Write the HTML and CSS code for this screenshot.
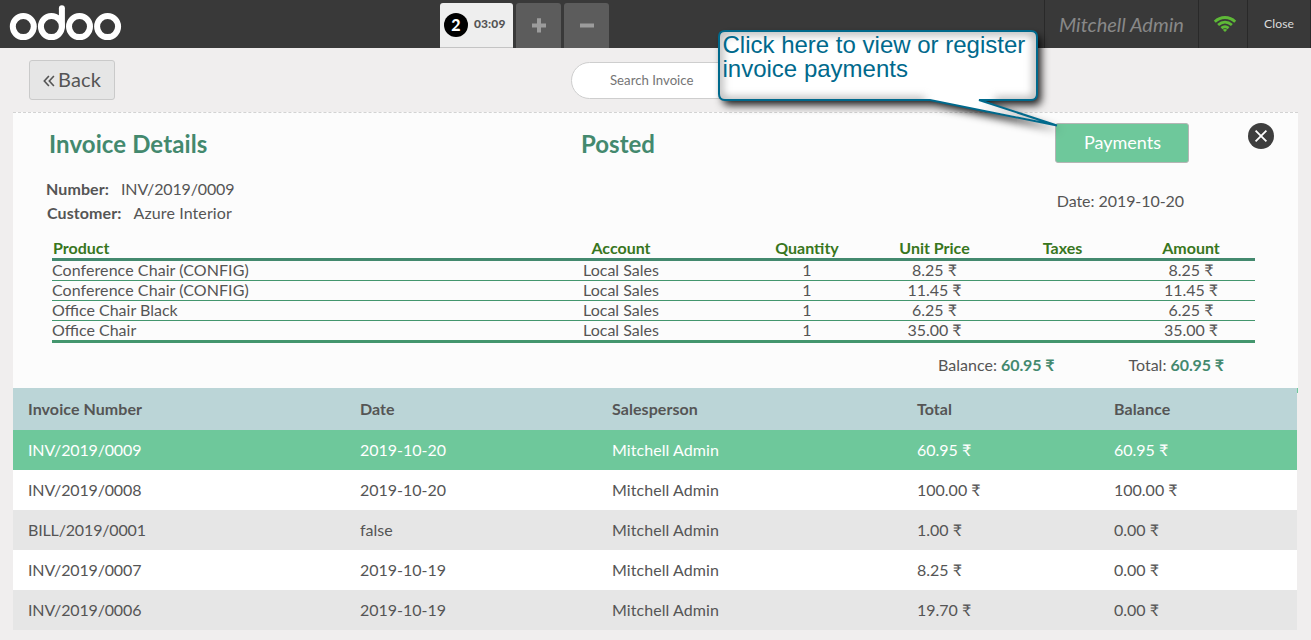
FILE: index.html
```html
<!DOCTYPE html>
<html lang="en">
<head>
<meta charset="utf-8">
<title>Invoices</title>
<link rel="stylesheet" href="styles.css">
</head>
<body>
<header class="topbar">
  <svg class="logo" width="113" height="36" viewBox="0 0 113 36" fill="none" stroke="#fff" stroke-width="6">
    <circle cx="14.300" cy="21.600" r="10.500"/>
    <circle cx="42.400" cy="21.600" r="10.500"/>
    <circle cx="70.500" cy="21.600" r="10.500"/>
    <circle cx="98.600" cy="21.600" r="10.500"/>
    <path d="M52.900 21.600V3.200" stroke-linecap="round"/>
  </svg>
  <div class="orders">
    <div class="order"><span class="order-no">2</span><span class="order-time">03:09</span></div>
    <div class="order-btn"><svg width="16" height="16" viewBox="0 0 16 16"><path d="M6 0.200h4v5.300h5v4H10v5H6v-5H1v-4h5z" fill="#9c9c9c"/></svg></div>
    <div class="order-btn"><svg width="16" height="16" viewBox="0 0 16 16"><path d="M1 5.500h14v4H1z" fill="#9c9c9c"/></svg></div>
  </div>
  <div class="user">Mitchell Admin</div>
  <div class="wifi">
    <svg width="24" height="18" viewBox="0 0 24 18" fill="none" stroke="#5eb937" stroke-width="2.800">
      <path d="M1.800 7.700C7.600 2.100 16.400 2.100 22.200 7.700"/>
      <path d="M5.100 11C9.300 7.300 14.700 7.300 18.900 11"/>
      <path d="M8.400 14.200C10.600 12.400 13.400 12.400 15.600 14.200"/>
      <path d="M12 17.900l-2.300-2.200c1.300-1.100 3.300-1.100 4.600 0z" fill="#5eb937" stroke="none"/>
    </svg>
  </div>
  <div class="close">Close</div>
</header>
<section class="toolbar">
  <button class="back"><svg class="chevrons" width="12" height="12" viewBox="0 0 12 12" fill="none" stroke="#555" stroke-width="1.600"><path d="M5.900 1L1.300 6l4.600 5M10.900 1L6.300 6l4.600 5"/></svg><span class="back-label">Back</span></button>
  <div class="search">Search Invoice</div>
</section>
<main class="content">
  <section class="details">
    <div class="heading">
      <h2 class="title">Invoice Details</h2>
      <h2>Posted</h2>
      <button class="payments">Payments</button>
      <svg class="dismiss" width="26" height="26" viewBox="0 0 26 26"><circle cx="13" cy="13" r="13" fill="#3e3e3e"/><path d="M7.600 7.600l10.800 10.800M18.400 7.600L7.600 18.400" stroke="#fff" stroke-width="1.800"/></svg>
    </div>
    <div class="meta">
      <div class="meta-left">
        <div><b>Number:</b><span class="value number">INV/2019/0009</span></div>
        <div class="customer"><b>Customer:</b><span class="value">Azure Interior</span></div>
      </div>
      <div class="date">Date: 2019-10-20</div>
    </div>
    <div class="lines">
      <div class="line line-head"><span>Product</span><span>Account</span><span>Quantity</span><span>Unit Price</span><span>Taxes</span><span>Amount</span></div>
      <div class="line"><span class="config">Conference Chair (CONFIG)</span><span>Local Sales</span><span>1</span><span>8.25 ₹</span><span></span><span>8.25 ₹</span></div>
      <div class="line"><span class="config">Conference Chair (CONFIG)</span><span>Local Sales</span><span>1</span><span>11.45 ₹</span><span></span><span>11.45 ₹</span></div>
      <div class="line"><span>Office Chair Black</span><span>Local Sales</span><span>1</span><span>6.25 ₹</span><span></span><span>6.25 ₹</span></div>
      <div class="line line-last"><span>Office Chair</span><span>Local Sales</span><span>1</span><span>35.00 ₹</span><span></span><span>35.00 ₹</span></div>
    </div>
    <div class="totals"><div class="balance">Balance: <b>60.95 ₹</b></div><div>Total: <b>60.95 ₹</b></div></div>
  </section>
  <section class="invoices">
    <div class="row row-head"><span>Invoice Number</span><span>Date</span><span>Salesperson</span><span>Total</span><span>Balance</span></div>
    <div class="row selected"><span class="number">INV/2019/0009</span><span>2019-10-20</span><span class="person">Mitchell Admin</span><span>60.95 ₹</span><span>60.95 ₹</span></div>
    <div class="row"><span class="number">INV/2019/0008</span><span>2019-10-20</span><span class="person">Mitchell Admin</span><span>100.00 ₹</span><span>100.00 ₹</span></div>
    <div class="row alt"><span class="number">BILL/2019/0001</span><span>false</span><span class="person">Mitchell Admin</span><span>1.00 ₹</span><span>0.00 ₹</span></div>
    <div class="row"><span class="number">INV/2019/0007</span><span>2019-10-19</span><span class="person">Mitchell Admin</span><span>8.25 ₹</span><span>0.00 ₹</span></div>
    <div class="row alt"><span class="number">INV/2019/0006</span><span>2019-10-19</span><span class="person">Mitchell Admin</span><span>19.70 ₹</span><span>0.00 ₹</span></div>
    <i class="edge"></i>
  </section>
</main>
<aside class="callout">
  <svg class="bubble" width="380" height="130" viewBox="0 0 380 130">
    <defs>
      <linearGradient id="tip" gradientUnits="userSpaceOnUse" x1="280" y1="80" x2="345" y2="102"><stop offset="0" stop-color="#fff"/><stop offset="1" stop-color="#bbb"/></linearGradient>
      <clipPath id="box"><path d="M25 11H331Q337 11 337 17V74Q337 80 331 80H25Q19 80 19 74V17Q19 11 25 11Z"/></clipPath>
      <filter id="soft" filterUnits="userSpaceOnUse" x="0" y="0" width="380" height="130"><feGaussianBlur stdDeviation="4"/></filter>
      <filter id="shadow" filterUnits="userSpaceOnUse" x="0" y="0" width="380" height="130"><feDropShadow dx="4" dy="5" stdDeviation="4.500" flood-color="#000" flood-opacity=".9"/></filter>
    </defs>
    <path filter="url(#shadow)" d="M25 11H331Q337 11 337 17V74Q337 80 331 80H279L357 105.500L230 80H25Q19 80 19 74V17Q19 11 25 11Z" fill="#fff"/>
    <g clip-path="url(#box)"><path filter="url(#soft)" d="M225 81H25Q19 80 19 74V17Q19 11 25 11H331Q337 11 337 17V74Q337 80 331 81H295" fill="none" stroke="#aaa" stroke-width="7"/></g>
    <path d="M234 79.500L279 79.500L354 104.500Z" fill="url(#tip)"/>
    <path d="M25 11H331Q337 11 337 17V74Q337 80 331 80H279L357 105.500L230 80H25Q19 80 19 74V17Q19 11 25 11Z" fill="none" stroke="#00698c" stroke-width="2"/>
  </svg>
  <p class="tip-text">Click here to view or register<br>invoice payments</p>
</aside>
</body>
</html>
```
FILE: styles.css
```css
* { box-sizing: border-box; }
body {
  margin: 0;
  height: 640px;
  overflow: hidden;
  position: relative;
  background: #f0eeee;
  color: #555;
  font: 16px/20px Lato, "Open Sans", sans-serif;
}
button { font-family: inherit; color: inherit; margin: 0; }
.topbar {
  display: flex;
  height: 48px;
  background: #393939;
}
.logo { margin: 5px 0 0 9px; }
.orders { display: flex; gap: 3px; margin-left: 318px; padding-top: 3px; }
.order {
  display: flex;
  align-items: center;
  width: 73px;
  padding: 0 0 1px 4px;
  background: #eee;
  border-bottom: 1px solid #c4c4c4;
  border-radius: 3px 3px 0 0;
}
.order-no {
  width: 24px;
  height: 24px;
  border-radius: 50%;
  background: #000;
  color: #fff;
  font-size: 16px;
  font-weight: 900;
  line-height: 24px;
  text-align: center;
}
.order-time {
  margin-left: 6px;
  padding-bottom: 2px;
  font-size: 12px;
  font-weight: 900;
  letter-spacing: .1px;
}
.order-btn {
  display: flex;
  align-items: center;
  justify-content: center;
  width: 45px;
  background: #5c5c5c;
  border-radius: 3px 3px 0 0;
}
.user, .wifi, .close { border-left: 1px solid #292929; }
.user {
  width: 154px;
  margin-left: auto;
  padding-left: 14px;
  color: #888;
  font-size: 20px;
  font-style: italic;
  line-height: 48px;
}
.wifi { width: 49px; padding: 14px 0 0 14px; }
.close {
  width: 64px;
  border-right: 1px solid #292929;
  color: #ddd;
  font-size: 12.2px;
  letter-spacing: .1px;
  line-height: 48px;
  text-align: center;
}
.toolbar { display: flex; height: 64px; padding: 12px 0 0 29px; }
.back {
  display: flex;
  align-items: center;
  gap: 3px;
  width: 86px;
  height: 40px;
  padding: 0 0 0 13px;
  border: 1px solid #cacaca;
  border-radius: 3px;
  background: #e6e6e6;
  font-size: 20px;
}
.chevrons { margin-top: 2px; }
.back-label { padding-bottom: 2px; letter-spacing: .15px; }
.search {
  width: 240px;
  height: 37px;
  margin: 2px 0 0 456px;
  padding-left: 38px;
  border: 1px solid #cecece;
  border-radius: 19px;
  background: #fff;
  color: #757575;
  font-size: 13.2px;
  line-height: 35px;
}
.content { width: 1285px; margin-left: 13px; }
.details {
  height: 276px;
  border-top: 1px dashed #d3d3d3;
  background: #fcfcfc;
}
.heading {
  display: grid;
  grid-template-columns: 532px 474px 193px 26px;
  align-items: start;
  height: 64px;
  padding: 10px 0 0 36px;
}
h2 { margin: 0; color: #43896e; font-size: 24px; line-height: 41px; font-weight: 700; }
.title { letter-spacing: .1px; }
.payments {
  width: 134px;
  height: 40px;
  padding: 0 0 2px 1px;
  border: 1px solid #b5b5b5;
  border-radius: 3px;
  background: #6ec89b;
  color: #fff;
  font-size: 18px;
}
.meta {
  display: flex;
  justify-content: space-between;
  height: 61px;
  padding: 0 114px 0 33px;
  line-height: 24px;
}
.meta b { letter-spacing: .1px; }
.value { margin-left: 12px; letter-spacing: .1px; }
.number { letter-spacing: -.15px; }
.person { letter-spacing: .07px; }
.customer { padding-left: 1px; }
.date { padding-top: 12px; letter-spacing: -.06px; }
.lines { width: 1203px; margin-left: 39px; }
.line {
  display: grid;
  grid-template-columns: 447px 244px 128px 127px 129px 128px;
  height: 20px;
  border-bottom: 1px solid #44966e;
  line-height: 18px;
  text-align: center;
}
.line span:first-child { text-align: left; }
.config { letter-spacing: .07px; }
.line-head {
  height: 23px;
  border-bottom: 3px solid #43896e;
  color: #38761d;
  font-weight: 700;
  line-height: 20px;
}
.line-head span:first-child { padding-left: 1px; }
.line-last { height: 22px; border-bottom-width: 3px; }
.totals {
  display: flex;
  justify-content: flex-end;
  gap: 74px;
  padding: 12px 74px 0 0;
}
.totals b { color: #43896e; letter-spacing: -.08px; }
.invoices { position: relative; width: 1284px; }
.row {
  display: grid;
  grid-template-columns: 332px 252px 305px 197px 183px;
  height: 40px;
  padding-left: 15px;
  background: #fff;
  line-height: 40px;
}
.row-head {
  height: 42px;
  background: #bbd5d7;
  font-weight: 700;
  letter-spacing: .07px;
  line-height: 42px;
}
.selected { background: #6ec89b; color: #fff; }
.alt { background: #e6e6e6; }
.edge { position: absolute; top: 0; right: -1px; width: 1px; height: 5px; background: #6ec89b; }
.callout { position: absolute; left: 700px; top: 20px; width: 380px; height: 130px; }
.bubble { display: block; }
.tip-text {
  position: absolute;
  left: 22.5px;
  top: 13px;
  margin: 0;
  color: #00698c;
  font: 24px/24px "Liberation Sans", Arial, sans-serif;
  white-space: nowrap;
}
```
